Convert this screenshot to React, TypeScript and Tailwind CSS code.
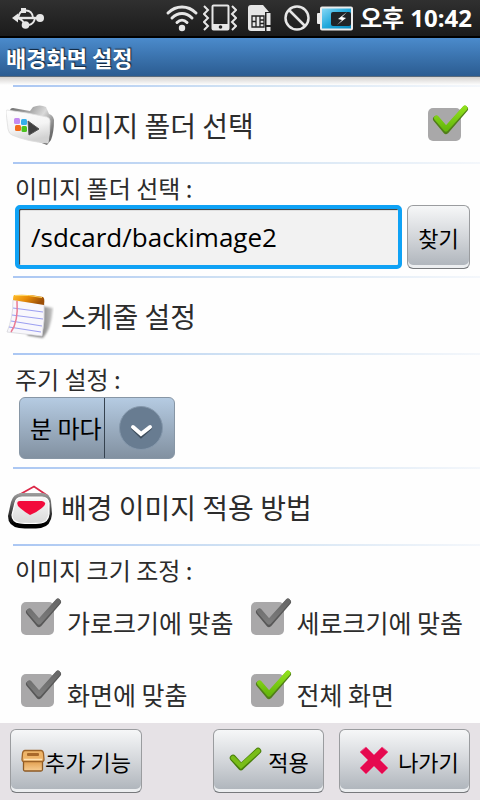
import { useState } from "react";
import type { ReactNode } from "react";

const buttonClass =
  "flex h-16 items-center justify-center rounded-[6px] border border-[#9a9c9f] border-b-[#77797c] bg-linear-to-b from-[#f6f7f8] via-[#d3d6da] to-[#adb3ba] text-[22px] leading-7 text-black shadow-[inset_0_-3px_0_#eceef0]";

const UsbIcon = () => (
  <svg width="34" height="24" viewBox="0 0 34 24" fill="none" stroke="#e6e6e6" strokeWidth="1.800" aria-hidden="true">
    <path d="M5 12h22" strokeWidth="2.400" />
    <path d="M0 12l6-4.500v9z" fill="#e6e6e6" stroke="none" />
    <path d="M14 4.500q6 0 7 7M17 19q5-1 6-7M4 12q5 0 8 5M6 12q1-5 4-7" />
    <rect x="9" y="2" width="5" height="5" fill="#e6e6e6" stroke="none" />
    <circle cx="13.500" cy="19" r="3.800" fill="#e6e6e6" stroke="none" />
    <circle cx="28" cy="12" r="4" fill="#e6e6e6" stroke="none" />
  </svg>
);

const WifiIcon = () => (
  <svg width="34" height="28" viewBox="0 0 34 28" fill="none" stroke="#e6e6e6" strokeWidth="3" strokeLinecap="round" aria-hidden="true">
    <path d="M3 9c8-8 20-8 28 0M7 14c6-6 14-6 20 0M12 18.500c3-3 7-3 10 0" />
    <circle cx="17" cy="24" r="3.200" fill="#e6e6e6" stroke="none" />
  </svg>
);

const VibrateIcon = () => (
  <svg width="34" height="28" viewBox="0 0 34 28" fill="none" stroke="#e6e6e6" aria-hidden="true">
    <rect x="9.500" y="1.500" width="16" height="24" rx="1" strokeWidth="2" />
    <path d="M9 20h17v6H9z" fill="#e6e6e6" stroke="none" />
    <circle cx="17.500" cy="23" r="1.800" fill="#222" stroke="none" />
    <path d="M1 2l4 4-4 4 4 4-4 4 4 4-4 4M29 2l4 4-4 4 4 4-4 4 4 4-4 4" strokeWidth="2" />
  </svg>
);

const SimIcon = () => (
  <svg width="26" height="28" viewBox="0 0 26 28" aria-hidden="true">
    <path d="M4 1h12l6 7v17a2 2 0 0 1-2 2H4a3 3 0 0 1-3-3V4a3 3 0 0 1 3-3z" fill="#e6e6e6" />
    <path d="M5 12h12v11H5zM9 12v11M13 12v11M5 17.500h4M13 16h4M13 19.500h4" fill="none" stroke="#222" strokeWidth="1.300" />
    <path d="M18 8h6v20h-6z" fill="#222" />
    <path d="M19.500 9h4v12h-4zM19.500 23h4v4h-4z" fill="#e6e6e6" />
  </svg>
);

const BlockedIcon = () => (
  <svg width="28" height="28" viewBox="0 0 28 28" fill="none" stroke="#e6e6e6" strokeWidth="2.500" aria-hidden="true">
    <circle cx="14" cy="14" r="11.500" />
    <path d="M6 6l16 16" />
  </svg>
);

const BatteryIcon = () => (
  <svg width="36" height="25" viewBox="0 0 36 25" aria-hidden="true">
    <defs>
      <linearGradient id="charge" x2="1" y2="1">
        <stop stopColor="#8fdcf8" />
        <stop offset="0.500" stopColor="#22a9dc" />
        <stop offset="1" stopColor="#0485bc" />
      </linearGradient>
    </defs>
    <rect y="7" width="4" height="11" rx="1" fill="#ececec" />
    <rect x="4" y="1.500" width="31" height="22" rx="1" fill="url(#charge)" stroke="#ececec" strokeWidth="2" />
    <rect x="14" y="6" width="20" height="14" rx="2" fill="#202428" />
    <path d="M30 6l-9 7 4 1-5 5 9-7-4-1z" fill="#fff" />
  </svg>
);

const FolderIcon = () => (
  <svg width="48" height="48" viewBox="0 0 48 48" aria-hidden="true">
    <defs>
      <linearGradient id="folder-front" y2="1" x2="0.300">
        <stop stopColor="#fff" />
        <stop offset="0.600" stopColor="#f4f4f4" />
        <stop offset="1" stopColor="#d2d2d2" />
      </linearGradient>
      <linearGradient id="folder-back" y2="0.600">
        <stop stopColor="#6a6a6a" />
        <stop offset="0.400" stopColor="#a8a8a8" />
        <stop offset="0.650" stopColor="#dadada" />
        <stop offset="1" stopColor="#6e6e6e" />
      </linearGradient>
      <filter id="folder-soft">
        <feGaussianBlur stdDeviation="0.600" />
      </filter>
    </defs>
    <path d="M4 10q0-3 3-3l17 3 3-4q7-3 13 0l3 7q4 1 5 6 0 12-3 20l-4 5-8-3z" fill="url(#folder-back)" filter="url(#folder-soft)" />
    <path d="M1 9l20 3 20 4q3 1 3 4 0 12-2 22Q22 41 6 34 3 33 2 28L0 11q0-2 1-2z" fill="url(#folder-front)" stroke="#dedede" strokeWidth="0.800" />
    <rect x="8" y="17" width="6" height="6" rx="1.500" fill="#c48bf0" />
    <rect x="15" y="18" width="6" height="6" rx="1.500" fill="#35aeea" />
    <rect x="9" y="24" width="6" height="6" rx="1.500" fill="#f26a1c" />
    <rect x="15.500" y="25" width="5.500" height="6" rx="1.500" fill="#4cc31f" />
    <path d="M22 20l11 8-10 6z" fill="#404040" stroke="#555" />
  </svg>
);

const NotepadIcon = () => (
  <svg width="48" height="48" viewBox="0 0 48 48" aria-hidden="true">
    <defs>
      <linearGradient id="pad-top" y2="0.400">
        <stop stopColor="#ffbe2e" />
        <stop offset="0.500" stopColor="#e88c08" />
        <stop offset="1" stopColor="#9c4f08" />
      </linearGradient>
      <linearGradient id="pad-shadow">
        <stop stopColor="#555" />
        <stop offset="0.700" stopColor="#999" />
        <stop offset="1" stopColor="#c8c8c8" />
      </linearGradient>
      <filter id="pad-soft" x="-0.200" y="-0.200" width="1.400" height="1.400">
        <feGaussianBlur stdDeviation="0.900" />
      </filter>
    </defs>
    <path d="M35 14l12 2q-1 11-4 20-2 5-6 10l-16-3z" fill="url(#pad-shadow)" filter="url(#pad-soft)" />
    <path d="M7 8l31 4q1 17-2 32L1 40Q7 26 7 8z" fill="#f8f7fc" stroke="#d5d5da" strokeWidth="0.800" />
    <path d="M7 16l30 4M6 23l31 4M5 29l31 5M3 35l32 5" stroke="#9c9ff0" strokeWidth="1.100" fill="none" />
    <path d="M11 9c1 14-1 24-6 31" stroke="#ea7b93" strokeWidth="1.500" fill="none" />
    <path d="M8 3q16-1 29 2 2 1 1 8L7 8q0-4 1-5z" fill="url(#pad-top)" />
    <path d="M9 3.500q14-1 27 2" stroke="#ffd35e" fill="none" />
  </svg>
);

const FrameIcon = () => (
  <svg width="48" height="48" viewBox="0 0 48 48" aria-hidden="true">
    <defs>
      <linearGradient id="frame-edge" x2="0" y2="1">
        <stop stopColor="#a0a0a0" />
        <stop offset="0.400" stopColor="#555" />
        <stop offset="0.800" stopColor="#080808" />
        <stop offset="1" stopColor="#000" />
      </linearGradient>
      <linearGradient id="frame-face" x2="0" y2="1">
        <stop stopColor="#f8f8f8" />
        <stop offset="1" stopColor="#d9d9d9" />
      </linearGradient>
      <filter id="frame-soft" x="-0.100" y="-0.100" width="1.200" height="1.200">
        <feGaussianBlur stdDeviation="0.700" />
      </filter>
    </defs>
    <path d="M11 13L28 3.500 42 13" fill="none" stroke="#dc2848" strokeWidth="1.800" />
    <path d="M15 10h22q7 1 8 8l1 13q-1 12-11 14-10 1-22 0Q2 43 2 33l3-14q2-8 10-9z" fill="url(#frame-edge)" filter="url(#frame-soft)" />
    <path d="M16 14h20q6 0 7 6v11q-1 8-8 9-11 1-21 0-8-1-8-8l3-12q1-6 7-6z" fill="url(#frame-face)" stroke="#fff" strokeWidth="1.200" />
    <path d="M14 18h22q5 1 2 5-6 6-14 9-7-4-12-9-2-5 2-5z" fill="#f20b3c" />
  </svg>
);

const BoxIcon = () => (
  <svg width="24" height="24" viewBox="0 0 24 24" aria-hidden="true">
    <defs>
      <linearGradient id="box-body" x2="0" y2="1">
        <stop stopColor="#dc9440" />
        <stop offset="1" stopColor="#f7cd92" />
      </linearGradient>
    </defs>
    <rect x="2.500" y="10" width="19" height="12" rx="1.500" fill="url(#box-body)" stroke="#8d5a24" strokeWidth="1.300" />
    <path d="M4 1.500h16q2 0 2.500 3l.5 6q0 2-2 2H3q-2 0-2-2l.5-6q.5-3 2.500-3z" fill="#eeb468" stroke="#9d6328" strokeWidth="1.300" />
    <rect x="6" y="4" width="12" height="3" rx="1" fill="#a9692a" />
    <path d="M3 10.500h18" stroke="#ffe2b4" strokeWidth="1.500" />
  </svg>
);

const ApplyIcon = () => (
  <svg width="34" height="28" viewBox="0 0 34 28" aria-hidden="true">
    <path d="M5 11l8 9L30 4" fill="none" stroke="#477d08" strokeWidth="6.500" strokeLinejoin="round" strokeLinecap="round" />
    <path d="M5 11l8 8L30 4" fill="none" stroke="#79bd18" strokeWidth="4.500" strokeLinecap="round" />
  </svg>
);

const ExitIcon = () => (
  <svg width="32" height="32" viewBox="0 0 32 32" aria-hidden="true">
    <path d="M2 7l6-5 8 8 8-8 6 5-8 8 8 8-6 6-8-8-8 8-6-6 8-8z" fill="#e5094f" stroke="#e8588a" strokeLinejoin="round" />
  </svg>
);

type CheckBoxProps = {
  id: string;
  checked: boolean;
  onChange: () => void;
  label?: string;
};

const CheckBox = ({ id, checked, onChange, label }: CheckBoxProps) => (
  <span className="relative flex h-10 w-10 shrink-0 items-center">
    <input
      id={id}
      type="checkbox"
      checked={checked}
      onChange={onChange}
      aria-label={label}
      className="h-[33px] w-[33px] appearance-none rounded-[5px] bg-[#a9a8a9]"
    />
    <svg width="42" height="40" viewBox="0 0 42 40" fill="none" strokeLinecap="round" strokeLinejoin="round" className="pointer-events-none absolute top-0 left-0" aria-hidden="true">
      <defs>
        <linearGradient id="tick-on" x2="0" y2="1">
          <stop stopColor="#8fdf1c" />
          <stop offset="1" stopColor="#66b80c" />
        </linearGradient>
        <linearGradient id="tick-off" x2="0" y2="1">
          <stop stopColor="#686868" />
          <stop offset="1" stopColor="#7c7c7c" />
        </linearGradient>
      </defs>
      <path d="M8 14l10 12L37 4" stroke={checked ? "#507e18" : "#585858"} strokeWidth="6" />
      <path d="M8.500 13l9.500 11L37 3" stroke={checked ? "url(#tick-on)" : "url(#tick-off)"} strokeWidth="5" />
    </svg>
  </span>
);

const Divider = () => (
  <div className="ml-[13px] h-[2px] bg-linear-to-r from-[#abc7f3] via-[#d2e3f3] to-[#f4f7fb]" />
);

type SectionHeadingProps = {
  icon: ReactNode;
  title: string;
  children?: ReactNode;
};

const SectionHeading = ({ icon, title, children }: SectionHeadingProps) => (
  <>
    <Divider />
    <div className="flex h-[75px] items-center gap-[7px] pr-3 pl-[6px]">
      {icon}
      <h2 className="flex-1 text-[28px] leading-9">{title}</h2>
      {children}
    </div>
    <Divider />
  </>
);

const fitOptions = [
  { id: "width", label: "가로크기에 맞춤" },
  { id: "height", label: "세로크기에 맞춤" },
  { id: "screen", label: "화면에 맞춤" },
  { id: "full", label: "전체 화면" },
];

export default function App() {
  const [enabled, setEnabled] = useState(true);
  const [path, setPath] = useState("/sdcard/backimage2");
  const [fit, setFit] = useState("full");

  return (
    <div className="flex min-h-screen flex-col bg-[#fefefe] font-['Noto_Sans_CJK_KR',sans-serif] text-[#2c2c2c]">
      <div className="flex h-[38px] items-center justify-between border-b-2 border-black bg-linear-to-b from-[#303030] to-[#1b1b1b] pr-2 pl-3">
        <UsbIcon />
        <div className="flex items-center gap-[4px]">
          <WifiIcon />
          <VibrateIcon />
          <span className="flex pl-[6px]">
            <SimIcon />
          </span>
          <span className="flex pr-[2px] pl-[6px]">
            <BlockedIcon />
          </span>
          <BatteryIcon />
          <span className="pl-[3px] font-['Noto_Sans','Noto_Sans_CJK_KR',sans-serif] text-[24px] leading-8 font-bold text-white">
            오후 10:42
          </span>
        </div>
      </div>
      <header className="flex h-[39px] items-center border-b border-[#5b6b7c] bg-linear-to-b from-[#4b8bcc] to-[#2b5c91] px-[6px]">
        <h1 className="text-[22px] leading-8 font-bold text-white [text-shadow:1px_-1px_1px_#10253c]">배경화면 설정</h1>
      </header>

      <main className="flex-1">
        <div className="h-2 bg-linear-to-b from-[#d5d2d0] to-[#fefefe]" />
        <SectionHeading icon={<FolderIcon />} title="이미지 폴더 선택">
          <CheckBox id="enabled" label="이미지 폴더 선택" checked={enabled} onChange={() => setEnabled(!enabled)} />
        </SectionHeading>
        <div className="flex flex-col gap-[3px] px-[15px] pt-[10px] pb-[7px]">
          <label htmlFor="path" className="text-[24px] leading-7">
            이미지 폴더 선택 :
          </label>
          <div className="-mr-[5px] flex gap-[5px]">
            <input
              id="path"
              type="text"
              value={path}
              onChange={(e) => setPath(e.target.value)}
              className="h-16 min-w-0 flex-1 rounded-[5px] border-4 border-[#0fa2f5] bg-[#f2f2f2] px-3 font-['Open_Sans','Noto_Sans_CJK_KR',sans-serif] text-[26px] text-black shadow-[inset_1px_1px_1px_#333] outline-none"
            />
            <button type="button" className={`${buttonClass} w-[63px]`}>
              찾기
            </button>
          </div>
        </div>

        <SectionHeading icon={<NotepadIcon />} title="스케줄 설정" />
        <div className="flex flex-col gap-[3px] px-[15px] pt-[10px] pb-[7px]">
          <label htmlFor="period" className="text-[24px] leading-7">
            주기 설정 :
          </label>
          <div className="flex h-16 items-center pl-[4px]">
            <div className="relative">
              <select
                id="period"
                defaultValue="minute"
                className="h-[62px] w-[156px] appearance-none rounded-[6px] border border-[#8796a5] bg-linear-to-b from-[#b5cbe2] to-[#8291a1] pr-[70px] pl-[10px] text-[24px] text-black"
              >
                <option value="minute">분 마다</option>
              </select>
              <span className="pointer-events-none absolute inset-y-px right-0 flex w-[71px] items-center justify-center border-l border-[#35424f]">
                <svg width="46" height="46" viewBox="0 0 46 46" fill="none" aria-hidden="true">
                  <circle cx="24" cy="23" r="21.500" fill="#687c91" stroke="#8497ab" />
                  <path d="M16 23l8 8 9-8" stroke="#3d4c5b" strokeWidth="4" strokeLinecap="round" />
                  <path d="M16 22l8 7 9-7" stroke="#fff" strokeWidth="4" strokeLinecap="round" />
                </svg>
              </span>
            </div>
          </div>
        </div>

        <SectionHeading icon={<FrameIcon />} title="배경 이미지 적용 방법" />
        <fieldset className="px-[15px] pt-[10px] pb-3">
          <legend className="float-left w-full text-[24px] leading-7">이미지 크기 조정 :</legend>
          <div className="clear-both -mr-[15px] grid grid-cols-2 gap-y-8 pt-[14px] pl-[6px]">
            {fitOptions.map((option) => (
              <div key={option.id} className="flex items-center gap-[6px]">
                <CheckBox id={option.id} checked={fit === option.id} onChange={() => setFit(option.id)} />
                <label htmlFor={option.id} className="pt-2 text-[25px] leading-8 whitespace-nowrap">
                  {option.label}
                </label>
              </div>
            ))}
          </div>
        </fieldset>
      </main>

      <footer className="flex justify-between bg-[#e6e2e6] px-[10px] pt-[6px] pb-[7px]">
        <button type="button" className={`${buttonClass} w-[132px]`}>
          <BoxIcon />
          추가 기능
        </button>
        <div className="flex gap-[15px]">
          <button type="button" className={`${buttonClass} w-[111px] gap-[6px]`}>
            <ApplyIcon />
            적용
          </button>
          <button type="button" className={`${buttonClass} w-[131px] gap-[8px] pl-2`}>
            <ExitIcon />
            나가기
          </button>
        </div>
      </footer>
    </div>
  );
}
